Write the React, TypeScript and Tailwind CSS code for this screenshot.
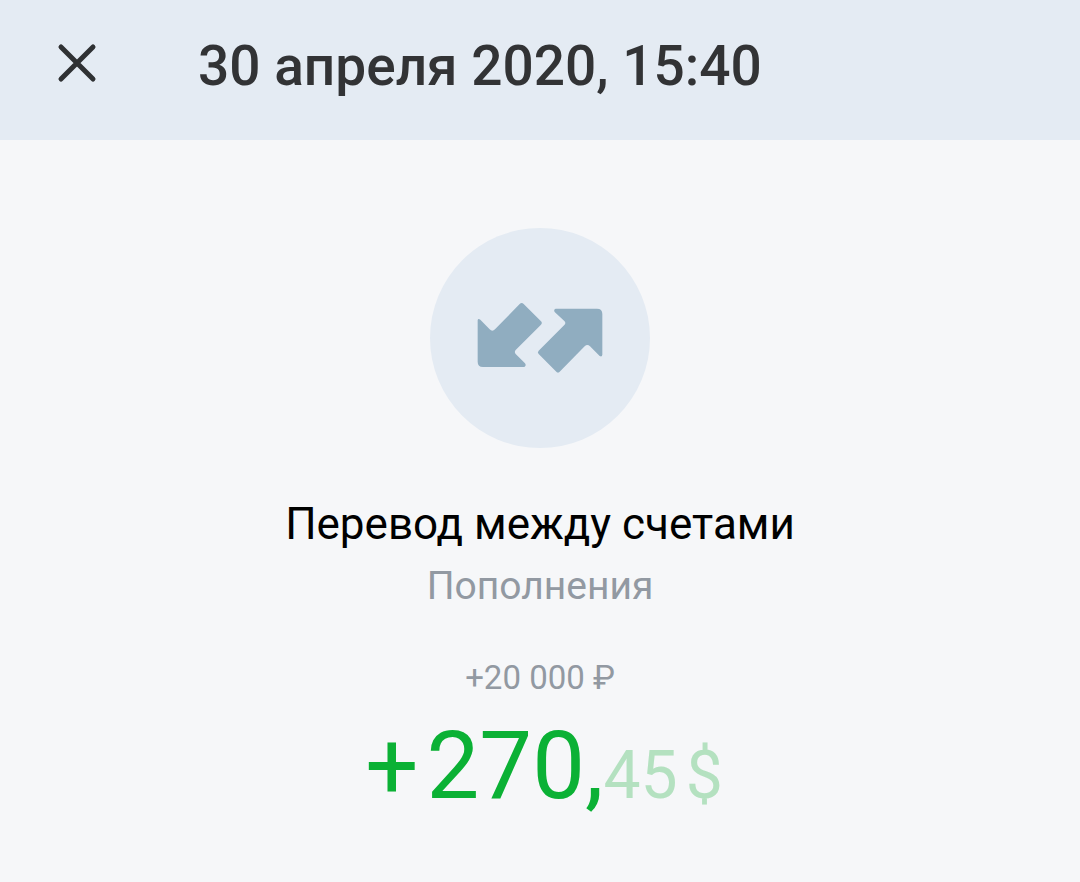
interface Operation {
  date: string;
  title: string;
  category: string;
  original: string;
  sign: string;
  whole: string;
  cents: string;
  currency: string;
}

const OPERATION: Operation = {
  date: "30 апреля 2020, 15:40",
  title: "Перевод между счетами",
  category: "Пополнения",
  original: "+20 000 ₽",
  sign: "+",
  whole: "270,",
  cents: "45",
  currency: "$",
};

function CloseIcon() {
  return (
    <svg width="40" height="40" viewBox="0 0 40 40" fill="none" aria-hidden="true">
      <path d="M4 4 L36 36 M36 4 L4 36" stroke="#2f3133" strokeWidth="5" strokeLinecap="round" />
    </svg>
  );
}

function TransferIcon() {
  return (
    <svg width="128" height="72" viewBox="48 36 384 216" fill="#90adc0" aria-hidden="true">
      {/* incoming arrow */}
      <path d="M53 91 Q54 84 61 89 L89 118 Q97 126 105 118 L179 42 Q185 36 191 42 L243 94 Q248 99 243 104 L167 180 Q162 186 167 192 L195 220 Q200 227 193 231 H69 Q53 231 53 215 Z" />
      {/* outgoing arrow */}
      <path d="M287 56 H411 Q427 56 427 72 V194 Q426 202 419 198 L390 169 Q382 161 374 169 L299 245 Q294 250 289 245 L236 192 Q231 187 236 182 L313 105 Q319 99 313 93 L284 66 Q280 59 287 56 Z" />
    </svg>
  );
}

export default function App() {
  return (
    <div className="flex min-h-screen flex-col bg-[#f6f7f9] font-[Roboto,sans-serif]">
      <header className="flex items-start bg-[#e4ebf3] px-[57px] pt-6 pb-8">
        <button
          type="button"
          aria-label="Закрыть"
          className="flex h-[78px] w-[141px] shrink-0 items-center"
        >
          <CloseIcon />
        </button>
        <h1 className="text-[55px] leading-21 font-medium text-[#323335]">{OPERATION.date}</h1>
      </header>

      <main className="flex flex-col items-center px-8 pt-22 pb-8 text-center">
        <div className="flex size-55 items-center justify-center rounded-full bg-[#e4ebf3]">
          <TransferIcon />
        </div>

        <h2 className="mt-12 text-[44px] leading-14 text-black">{OPERATION.title}</h2>
        <p className="mt-2.5 text-[39px] leading-12 text-[#9299a2]">{OPERATION.category}</p>

        <p className="mt-11 text-[33px] leading-12 text-[#9299a2]">{OPERATION.original}</p>
        <p className="mt-2 flex items-baseline pl-2 text-[94px] leading-28 text-[#0bb135]">
          <span className="mr-2">{OPERATION.sign}</span>
          <span>{OPERATION.whole}</span>
          <span className="text-[66px] text-[#b4e1c0]">{OPERATION.cents}</span>
          <span className="ml-2 text-[66px] text-[#b4e1c0]">{OPERATION.currency}</span>
        </p>
      </main>
    </div>
  );
}
